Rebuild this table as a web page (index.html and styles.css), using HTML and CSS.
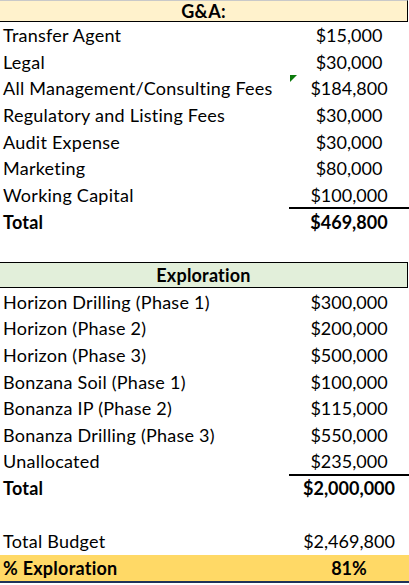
FILE: index.html
```html
<!DOCTYPE html>
<html>
<head>
<meta charset="utf-8">
<link rel="stylesheet" href="styles.css">
</head>
<body>
<div class="sheet">
  <div class="hdr hdr-ga">G&amp;A:</div>
  <div class="row"><span class="lbl">Transfer Agent</span><span class="val">$15,000</span></div>
  <div class="row"><span class="lbl">Legal</span><span class="val">$30,000</span></div>
  <div class="row"><span class="lbl">All Management/Consulting Fees</span><span class="val flagged"><i class="flag"></i>$184,800</span></div>
  <div class="row"><span class="lbl">Regulatory and Listing Fees</span><span class="val">$30,000</span></div>
  <div class="row"><span class="lbl">Audit Expense</span><span class="val">$30,000</span></div>
  <div class="row"><span class="lbl">Marketing</span><span class="val">$80,000</span></div>
  <div class="row"><span class="lbl">Working Capital</span><span class="val">$100,000</span></div>
  <div class="row bold"><span class="lbl">Total</span><span class="val topline">$469,800</span></div>
  <div class="row"></div>
  <div class="hdr hdr-ex">Exploration</div>
  <div class="row"><span class="lbl">Horizon Drilling (Phase 1)</span><span class="val">$300,000</span></div>
  <div class="row"><span class="lbl">Horizon (Phase 2)</span><span class="val">$200,000</span></div>
  <div class="row"><span class="lbl">Horizon (Phase 3)</span><span class="val">$500,000</span></div>
  <div class="row"><span class="lbl">Bonzana Soil (Phase 1)</span><span class="val">$100,000</span></div>
  <div class="row"><span class="lbl">Bonanza IP (Phase 2)</span><span class="val">$115,000</span></div>
  <div class="row"><span class="lbl">Bonanza Drilling (Phase 3)</span><span class="val">$550,000</span></div>
  <div class="row"><span class="lbl">Unallocated</span><span class="val">$235,000</span></div>
  <div class="row bold"><span class="lbl">Total</span><span class="val topline">$2,000,000</span></div>
  <div class="row"></div>
  <div class="row"><span class="lbl">Total Budget</span><span class="val">$2,469,800</span></div>
  <div class="row bold pct"><span class="lbl">% Exploration</span><span class="val">81%</span></div>
</div>
</body>
</html>
```
FILE: styles.css
```css
html, body {
  margin: 0;
  padding: 0;
  background: #ffffff;
}
.sheet {
  width: 409px;
  font-family: Lato, "Open Sans", sans-serif;
  font-size: 18px;
  color: #000;
  display: flex;
  flex-direction: column;
}
.hdr {
  box-sizing: border-box;
  width: 408px;
  border-right: 1px solid #000;
  font-weight: bold;
  letter-spacing: 0.2px;
  display: flex;
  align-items: center;
  justify-content: center;
}
.hdr-ga {
  height: 21.67px;
  background: #fff2cc;
  border-top: 1px solid #c9c9c9;
  border-bottom: 1px solid #000;
}
.hdr-ex {
  height: 26.67px;
  background: #e2efda;
  border-top: 1px solid #000;
  border-bottom: 1px solid #000;
}
.row {
  height: 26.67px;
  display: flex;
  align-items: stretch;
}
.lbl {
  width: 289px;
  padding-left: 3px;
  box-sizing: border-box;
  display: flex;
  align-items: center;
  white-space: nowrap;
  letter-spacing: 0.25px;
}
.val {
  width: 120px;
  display: flex;
  align-items: center;
  justify-content: center;
  white-space: nowrap;
}
.bold {
  font-weight: bold;
}
.topline {
  box-shadow: 0 -1px 0 #000, inset 0 1px 0 #000;
}
.flagged {
  position: relative;
}
.flag {
  position: absolute;
  left: 1px;
  top: 0;
  width: 0;
  height: 0;
  border-top: 7px solid #0c7a0c;
  border-right: 7px solid transparent;
}
.pct {
  background: #ffd966;
  box-sizing: border-box;
  border-bottom: 2px solid #1f3358;
  height: 28.67px;
}
```
